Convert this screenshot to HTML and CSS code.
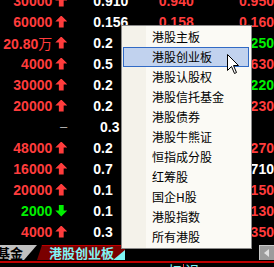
FILE: index.html
```html
<!DOCTYPE html>
<html lang="zh-CN">
<head>
    <meta charset="UTF-8">
    <title>港股行情</title>
    <link rel="stylesheet" href="styles.css">
</head>
<body>
    <div class="screen">
        <!-- Quote table -->
        <div class="quotes">
            <div class="row"><span class="c1 up">30000</span><span class="arr up-arrow"></span><span class="c2 white">0.910</span><span class="c3 red">0.940</span><span class="c4 red">0.950</span></div>
            <div class="row"><span class="c1 up">60000</span><span class="arr up-arrow"></span><span class="c2 white">0.156</span><span class="c3 red">0.158</span><span class="c4 red">0.160</span></div>
            <div class="row"><span class="c1 up">20.80<span class="cjk">万</span></span><span class="arr up-arrow"></span><span class="c2 cut white">0.2</span><span class="c3"></span><span class="c4 green">0.250</span></div>
            <div class="row"><span class="c1 up">4000</span><span class="arr up-arrow"></span><span class="c2 cut white">0.5</span><span class="c3"></span><span class="c4 red">0.630</span></div>
            <div class="row"><span class="c1 up">30000</span><span class="arr up-arrow"></span><span class="c2 cut white">0.2</span><span class="c3"></span><span class="c4 green">0.220</span></div>
            <div class="row"><span class="c1 up">20000</span><span class="arr up-arrow"></span><span class="c2 cut white">0.2</span><span class="c3"></span><span class="c4 red">0.230</span></div>
            <div class="row"><span class="c1"></span><span class="arr dash">–</span><span class="c2 cut white">0.3</span><span class="c3"></span><span class="c4"></span></div>
            <div class="row"><span class="c1 up">48000</span><span class="arr up-arrow"></span><span class="c2 cut white">0.2</span><span class="c3"></span><span class="c4 red">0.270</span></div>
            <div class="row"><span class="c1 up">16000</span><span class="arr up-arrow"></span><span class="c2 cut white">0.7</span><span class="c3"></span><span class="c4 white">0.710</span></div>
            <div class="row"><span class="c1 up">20000</span><span class="arr up-arrow"></span><span class="c2 cut white">0.1</span><span class="c3"></span><span class="c4 red">0.150</span></div>
            <div class="row"><span class="c1 down">2000</span><span class="arr down-arrow"></span><span class="c2 cut white">0.1</span><span class="c3"></span><span class="c4 red">0.130</span></div>
            <div class="row"><span class="c1 up">4000</span><span class="arr up-arrow"></span><span class="c2 cut white">0.3</span><span class="c3"></span><span class="c4 red">0.350</span></div>
        </div>

        <!-- Sheet tabs -->
        <div class="tabbar">
            <div class="tab tab-off">基金</div>
            <div class="tab tab-on">港股创业板</div>
            <div class="tab-space"></div>
            <div class="scroll-btn"></div>
        </div>
        <div class="red-line"></div>
        <div class="status"><span class="st-a">扫</span><span class="st-sep"></span><span class="st-b">识</span></div>

        <!-- Popup menu -->
        <ul class="menu">
            <li>港股主板</li>
            <li class="active">港股创业板</li>
            <li>港股认股权</li>
            <li>港股信托基金</li>
            <li>港股债券</li>
            <li>港股牛熊证</li>
            <li>恒指成分股</li>
            <li>红筹股</li>
            <li>国企H股</li>
            <li>港股指数</li>
            <li>所有港股</li>
        </ul>

        <svg class="cursor" width="13" height="21" viewBox="0 0 13 21">
            <path d="M0.5 0.5 L0.5 16.5 L4.5 12.5 L7.5 19.5 L9.5 18.5 L6.5 11.5 L11.5 11.5 Z" fill="#fff" stroke="#000" stroke-width="1"/>
        </svg>
    </div>
</body>
</html>
```

FILE: styles.css
```css
:root {
    --red: #ff3c3c;
    --green: #00f000;
    --white: #ffffff;
    --menu-bg: #fbfaf5;
    --menu-gutter: #f4f2ea;
    --hl-bg: #c1d2ee;
    --hl-border: #316ac5;
}

* {
    margin: 0;
    padding: 0;
    box-sizing: border-box;
}

body {
    background: #000;
    width: 274px;
    height: 267px;
    overflow: hidden;
}

.screen {
    position: relative;
    width: 274px;
    height: 267px;
    overflow: hidden;
    font-family: "Liberation Sans", Arial, sans-serif;
}

/* Quote table */
.quotes {
    margin-top: -10px;
}

.row {
    display: flex;
    align-items: center;
    height: 21px;
    font-size: 14px;
    font-weight: bold;
    white-space: nowrap;
}

.c1 {
    width: 56px;
    text-align: right;
}

.cjk {
    font-family: "Noto Sans CJK SC", sans-serif;
    font-weight: normal;
    font-size: 14px;
}

.arr {
    width: 44px;
    height: 12px;
    margin-left: 3px;
}

.c2 { width: 70px; margin-left: -3px; }
.c3 { width: 86px; }
.c4 { flex: 1; }

/* the popup covers the rest of these values */
.c2.cut {
    width: 70px;
}

.up, .red { color: var(--red); }
.down, .green { color: var(--green); }
.white { color: var(--white); }

.up-arrow::before,
.down-arrow::before {
    content: "";
    display: block;
    width: 12px;
    height: 12px;
}

.up-arrow::before {
    background: var(--red);
    clip-path: polygon(50% 0, 100% 50%, 70% 50%, 70% 100%, 30% 100%, 30% 50%, 0 50%);
}

.down-arrow::before {
    background: var(--green);
    clip-path: polygon(30% 0, 70% 0, 70% 50%, 100% 50%, 50% 100%, 0 50%, 30% 50%);
}

.dash {
    color: #b8b8b8;
    font-weight: normal;
    height: auto;
    line-height: 12px;
    font-size: 13px;
    padding-left: 1px;
}

/* Sheet tabs */
.tabbar {
    display: flex;
    height: 15px;
    margin-top: 3px;
    font-family: "Noto Sans CJK SC", sans-serif;
    font-weight: bold;
    font-size: 13px;
    line-height: 15px;
}

.tab {
    position: relative;
    white-space: nowrap;
}

.tab-off {
    width: 41px;
    margin-left: -4px;
    padding-left: 1px;
    background: #c0c0c0;
    color: #000;
}

.tab-off::after {
    content: "";
    position: absolute;
    right: 0;
    bottom: 0;
    border-left: 13px solid transparent;
    border-bottom: 15px solid #000;
}

.tab-on {
    width: 88px;
    padding-left: 12px;
    background: #7a0000;
    border-top: 1px solid #c00000;
    line-height: 14px;
    color: #7ff4f4;
    clip-path: polygon(5px 0, 100% 0, 100% 100%, 0 100%);
}

.tab-on::after {
    content: "";
    position: absolute;
    right: 0;
    bottom: 0;
    border-left: 12px solid transparent;
    border-bottom: 10px solid #7ff4f4;
}

.tab-space {
    flex: 1;
}

.scroll-btn {
    position: relative;
    width: 15px;
    background: #9c9c9c;
    border-top: 1px solid #c8c8c8;
    border-left: 1px solid #c8c8c8;
}

.scroll-btn::after {
    content: "";
    position: absolute;
    left: 4px;
    top: 3px;
    border-right: 5px solid #e0e0e0;
    border-top: 4px solid transparent;
    border-bottom: 4px solid transparent;
}

.red-line {
    height: 2px;
    margin-top: 1px;
    background: #c00000;
}

.status {
    display: flex;
    align-items: flex-start;
    padding-left: 168px;
    margin-top: 1px;
    font-family: "Noto Sans CJK SC", sans-serif;
    font-size: 14px;
    line-height: 12px;
    color: #7ff4f4;
}

.st-sep {
    width: 1px;
    height: 10px;
    margin: 0 1px;
    background: var(--red);
}

/* Popup menu */
.menu {
    position: absolute;
    left: 121px;
    top: 25px;
    width: 131px;
    padding: 1px 0;
    list-style: none;
    background: linear-gradient(to right, var(--menu-gutter) 0, var(--menu-gutter) 24px, var(--menu-bg) 24px);
    border: 1px solid #8a8a8a;
    font-family: "Noto Sans CJK SC", sans-serif;
    font-size: 12px;
    color: #000;
}

.menu li {
    height: 20px;
    margin: 0 2px 0 1px;
    padding-left: 28px;
    border: 1px solid transparent;
    line-height: 18px;
}

.menu li.active {
    background: var(--hl-bg);
    border-color: var(--hl-border);
}

.cursor {
    position: absolute;
    left: 227px;
    top: 54px;
}
```
